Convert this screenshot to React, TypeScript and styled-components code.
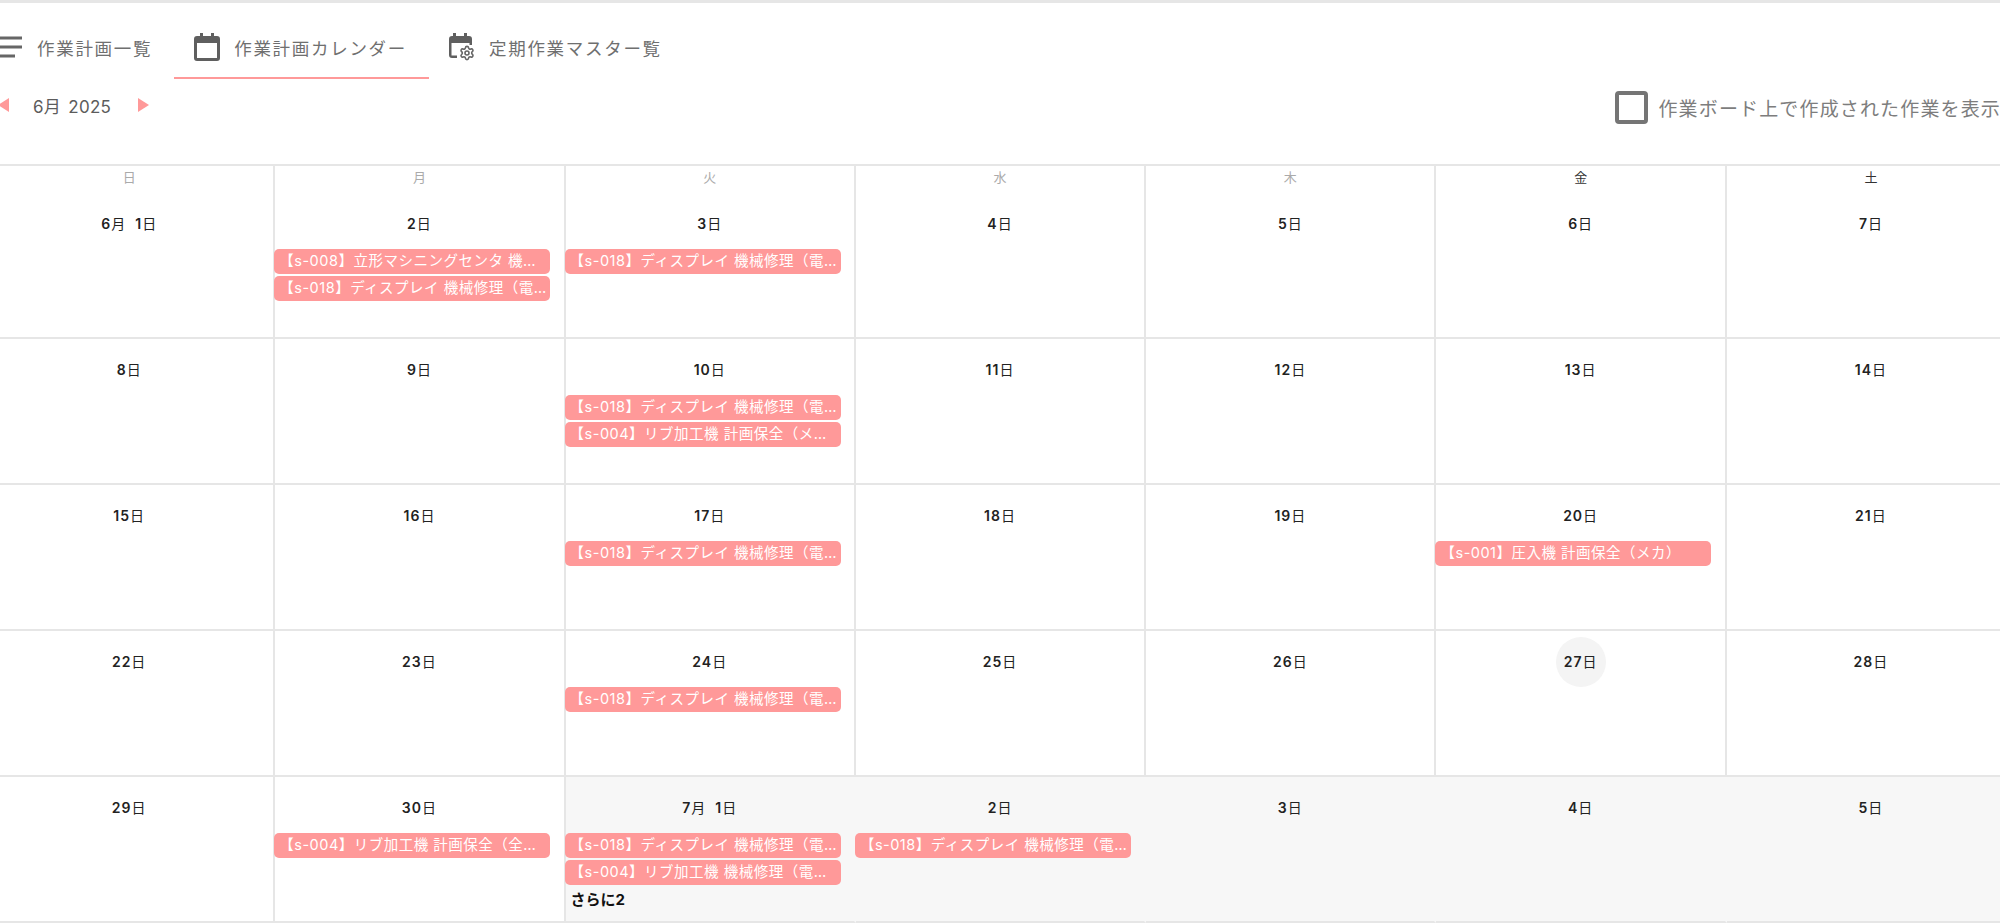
import React from "react";
import styled, { createGlobalStyle } from "styled-components";
import { Settings } from "lucide-react";

const FONT = `Inter, "Noto Sans CJK JP", sans-serif`;
const PINK = "#ff9999";
const LINE = "#e6e6e6";

const Global = createGlobalStyle`
  html, body { margin: 0; padding: 0; background: #fff; overflow: hidden; }
  body { font-family: ${FONT}; }
`;

const Page = styled.div`
  width: 2000px;
  height: 924px;
  overflow: hidden;
  border-top: 3px solid ${LINE};
  box-sizing: border-box;
`;
const Inner = styled.div`
  width: 2032px;
  margin-left: -15px;
`;
const Tabs = styled.nav`
  display: flex;
  margin-left: -12px;
  height: 76px;
`;
const Tab = styled.div<{ $active?: boolean }>`
  display: flex;
  align-items: center;
  gap: 14px;
  padding: 20px 22px 6px 20px;
  box-sizing: border-box;
  height: 76px;
  border-bottom: 2px solid ${(p) => (p.$active ? PINK : "transparent")};
  color: #6f6f6f;
  font-size: 17.5px;
  letter-spacing: 1.7px;
  white-space: nowrap;
  svg { flex: none; }
`;
const Toolbar = styled.div`
  display: flex;
  justify-content: space-between;
  height: 85px;
  padding-right: 16px;
  box-sizing: border-box;
`;
const Month = styled.div`
  display: flex;
  align-items: center;
  height: 52px;
  margin-left: 13px;
  color: #5c5c5c;
  font-size: 17px;
  letter-spacing: 0.3px;
`;
const Arrow = styled.span<{ $dir: "l" | "r" }>`
  width: 0;
  height: 0;
  border-top: 7px solid transparent;
  border-bottom: 7px solid transparent;
  ${(p) => (p.$dir === "l" ? `border-right: 11px solid ${PINK};` : `border-left: 11px solid ${PINK};`)}
`;
const MonthText = styled.span`
  margin: 0 25px 0 24px;
  width: 80px;
  white-space: nowrap;
  word-spacing: 2px;
`;
const CheckRow = styled.label`
  display: flex;
  align-items: center;
  gap: 10px;
  height: 57px;
  color: #7d7d7d;
  font-size: 19px;
  letter-spacing: 1.15px;
  white-space: nowrap;
`;
const Box = styled.span`
  width: 33px;
  height: 33px;
  box-sizing: border-box;
  border: 4px solid #757575;
  border-radius: 4px;
`;
const Calendar = styled.section`
  display: grid;
  grid-template-columns: repeat(7, 290.3px);
  border-top: 2px solid ${LINE};
`;
const Head = styled.div<{ $strong?: boolean }>`
  height: 27px;
  line-height: 23px;
  text-align: center;
  font-size: 13px;
  color: ${(p) => (p.$strong ? "#333" : "#aaa")};
  border-right: 2px solid ${LINE};
  box-sizing: border-box;
`;
const Cell = styled.div<{ $muted?: boolean }>`
  height: 146px;
  box-sizing: border-box;
  padding: 6px 0 0;
  background: ${(p) => (p.$muted ? "#f7f7f7" : "#fff")};
  border-bottom: 2px solid ${LINE};
  border-right: 2px solid ${(p) => (p.$muted ? "transparent" : LINE)};
  min-width: 0;
`;
const DateWrap = styled.div`
  display: flex;
  justify-content: center;
  height: 50px;
`;
const DateNum = styled.div<{ $today?: boolean }>`
  min-width: 50px;
  height: 50px;
  padding-bottom: 2px;
  box-sizing: border-box;
  border-radius: 50%;
  display: flex;
  align-items: center;
  justify-content: center;
  font-size: 14px;
  letter-spacing: 1px;
  font-weight: 600;
  color: #222;
  white-space: pre;
  background: ${(p) => (p.$today ? "#f4f4f4" : "transparent")};
`;
const Unit = styled.span`
  font-weight: 400;
`;
const Event = styled.div`
  width: 276px;
  height: 25px;
  line-height: 24px;
  margin: 0 0 2px -1px;
  padding: 0 2px 0 5px;
  box-sizing: border-box;
  background: ${PINK};
  border-radius: 5px;
  color: #fff;
  font-size: 14.5px;
  letter-spacing: 0.5px;
  white-space: pre;
  overflow: hidden;
  text-overflow: ellipsis;
`;
const More = styled.div`
  padding: 1px 0 0 5px;
  font-size: 15px;
  font-weight: 700;
  color: #111;
`;

const Hamburger = () => (
  <svg width="30" height="26" viewBox="0 0 30 26">
    <path d="M0 4h29M0 13h29M0 22h22" stroke="#666" strokeWidth="3" fill="none" />
  </svg>
);
const CalIcon = () => (
  <svg width="26" height="28" viewBox="0 0 26 28">
    <path d="M6 0h3v3h8V0h3v3h3a3 3 0 0 1 3 3v19a3 3 0 0 1-3 3H3a3 3 0 0 1-3-3V6a3 3 0 0 1 3-3h3zM3 10v15h20V10z" fill="#5f5f5f" fillRule="evenodd" />
  </svg>
);
const CalGearIcon = () => (
  <svg width="26" height="28" viewBox="0 0 26 28">
    <path d="M4 0h3v3h8V0h3v3h2a3 3 0 0 1 3 3v6h-2.500v-2H2.500v12.500H8V25H3a3 3 0 0 1-3-3V6a3 3 0 0 1 3-3h1z" fill="#5f5f5f" />
    <Settings x="10" y="12" width="16" height="16" stroke="#666" strokeWidth={2.4} />
  </svg>
);

const S018 = "【s-018】ディスプレイ 機械修理（電気）";
type Day = { d: string; ev?: string[]; today?: boolean; muted?: boolean; more?: string };
const days: Day[] = [
  { d: "6月  1日" },
  { d: "2日", ev: ["【s-008】立形マシニングセンタ 機械修理（電気）", S018] },
  { d: "3日", ev: [S018] },
  { d: "4日" }, { d: "5日" }, { d: "6日" }, { d: "7日" },
  { d: "8日" }, { d: "9日" },
  { d: "10日", ev: [S018, "【s-004】リブ加工機 計画保全（メカ）"] },
  { d: "11日" }, { d: "12日" }, { d: "13日" }, { d: "14日" },
  { d: "15日" }, { d: "16日" },
  { d: "17日", ev: [S018] },
  { d: "18日" }, { d: "19日" },
  { d: "20日", ev: ["【s-001】圧入機 計画保全（メカ）"] },
  { d: "21日" },
  { d: "22日" }, { d: "23日" },
  { d: "24日", ev: [S018] },
  { d: "25日" }, { d: "26日" },
  { d: "27日", today: true },
  { d: "28日" },
  { d: "29日" },
  { d: "30日", ev: ["【s-004】リブ加工機 計画保全（全体）"] },
  { d: "7月  1日", muted: true, ev: [S018, "【s-004】リブ加工機 機械修理（電気）"], more: "さらに2" },
  { d: "2日", muted: true, ev: [S018] },
  { d: "3日", muted: true }, { d: "4日", muted: true }, { d: "5日", muted: true },
];
const weekdays = ["日", "月", "火", "水", "木", "金", "土"];

const DateLabel = ({ text }: { text: string }) => (
  <>
    {text.split(/([月日])/).map((part, i) =>
      part === "月" || part === "日" ? <Unit key={i}>{part}</Unit> : part
    )}
  </>
);

export default function App() {
  return (
    <Page>
      <Global />
      <Inner>
        <Tabs>
          <Tab><Hamburger />作業計画一覧</Tab>
          <Tab $active><CalIcon />作業計画カレンダー</Tab>
          <Tab><CalGearIcon />定期作業マスター覧</Tab>
        </Tabs>
        <Toolbar>
          <Month>
            <Arrow $dir="l" />
            <MonthText>6月 2025</MonthText>
            <Arrow $dir="r" />
          </Month>
          <CheckRow><Box />作業ボード上で作成された作業を表示</CheckRow>
        </Toolbar>
        <Calendar>
          {weekdays.map((w, i) => <Head key={w} $strong={i >= 5}>{w}</Head>)}
          {days.map((c, i) => (
            <Cell key={i} $muted={c.muted}>
              <DateWrap><DateNum $today={c.today}><DateLabel text={c.d} /></DateNum></DateWrap>
              {c.ev?.map((e, j) => <Event key={j}>{e}</Event>)}
              {c.more && <More>{c.more}</More>}
            </Cell>
          ))}
        </Calendar>
      </Inner>
    </Page>
  );
}
